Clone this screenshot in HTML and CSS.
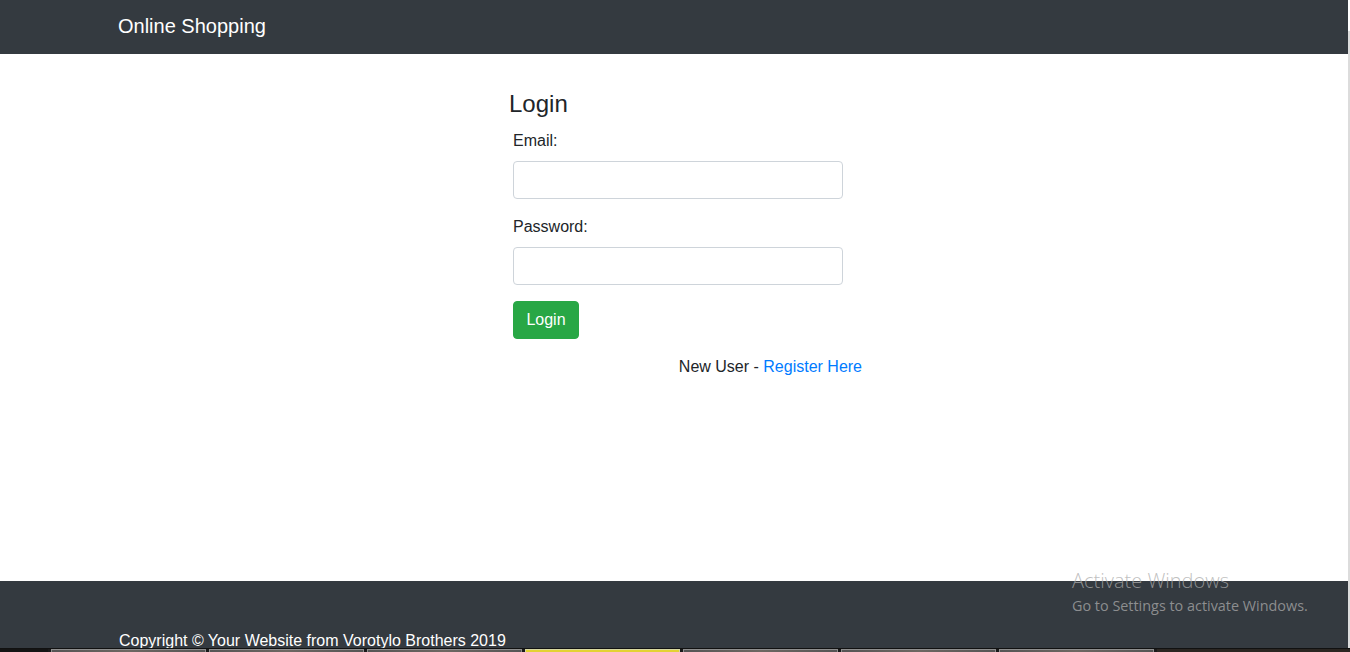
FILE: index.html
```html
<!DOCTYPE html>
<html lang="en">
<head>
<meta charset="utf-8">
<title>Online Shopping - Login</title>
<link rel="stylesheet" href="styles.css">
</head>
<body>
<div class="screen">
  <div class="page">
    <nav class="navbar">
      <div class="container">
        <a class="brand" href="#">Online Shopping</a>
      </div>
    </nav>
    <main class="main">
      <div class="container">
        <div class="login-col">
          <h3 class="title">Login</h3>
          <form class="form">
            <div class="group">
              <label class="label" for="email">Email:</label>
              <input class="input" id="email" type="email">
            </div>
            <div class="group">
              <label class="label" for="password">Password:</label>
              <input class="input" id="password" type="password">
            </div>
            <button class="btn" type="button">Login</button>
          </form>
          <p class="register">New User - <a class="link" href="#">Register Here</a></p>
        </div>
      </div>
    </main>
    <footer class="footer">
      <div class="container">
        <p class="copy">Copyright &copy; Your Website from Vorotylo Brothers 2019</p>
      </div>
    </footer>
  </div>
  <div class="edge"></div>
</div>
<div class="watermark">
  <div class="wm-title">Activate Windows</div>
  <div class="wm-sub">Go to Settings to activate Windows.</div>
</div>
<div class="taskbar">
  <div class="tb-start"></div>
  <div class="tb-item"></div>
  <div class="tb-item"></div>
  <div class="tb-item"></div>
  <div class="tb-item tb-active"></div>
  <div class="tb-item"></div>
  <div class="tb-item"></div>
  <div class="tb-item"></div>
  <div class="tb-rest"></div>
</div>
</body>
</html>
```
FILE: styles.css
```css
* { box-sizing: border-box; }
html, body {
  margin: 0;
  padding: 0;
  height: 652px;
  overflow: hidden;
}
body {
  font-family: "Liberation Sans", Arial, sans-serif;
  font-size: 16px;
  line-height: 1.5;
  color: #212529;
  background: #fff;
}
.screen {
  display: flex;
  height: 652px;
}
.page {
  width: 1348px;
  display: flex;
  flex-direction: column;
}
.edge {
  width: 2px;
  background: linear-gradient(to bottom, #ffffff 0, #ffffff 31px, #dcdcdc 31px, #dcdcdc 100%);
}
.container {
  width: 1140px;
  margin: 0 auto;
  padding: 0 15px;
}
.navbar {
  background: #343a40;
  height: 54px;
  display: flex;
  align-items: center;
}
.brand {
  color: #fff;
  text-decoration: none;
  font-size: 20px;
  line-height: 30px;
  display: inline-block;
  padding-bottom: 2px;
  margin-left: -1px;
}
.main {
  flex: 1;
}
.login-col {
  width: 355px;
  margin-left: 388px;
  padding-top: 35px;
}
.title {
  margin: 0 0 11px;
  padding-left: 2px;
  font-size: 24px;
  font-weight: 500;
  line-height: 29px;
}
.form {
  padding-left: 6px;
  width: 336px;
}
.group {
  margin-bottom: 16px;
}
.label {
  display: block;
  margin-bottom: 8px;
}
.input {
  display: block;
  width: 330px;
  height: 38px;
  border: 1px solid #ced4da;
  border-radius: 4px;
  background: #fff;
  padding: 6px 12px;
  font: inherit;
}
.btn {
  display: inline-block;
  background: #28a745;
  border: 1px solid #28a745;
  color: #fff;
  font: inherit;
  line-height: 24px;
  padding: 6px 12px;
  height: 38px;
  width: 66px;
  border-radius: 4px;
}
.register {
  margin: 16px 0 0;
  text-align: right;
}
.link {
  color: #007bff;
  text-decoration: none;
}
.footer {
  background: #343a40;
  height: 71px;
  padding-top: 48px;
}
.copy {
  margin: 0;
  color: #fff;
  white-space: nowrap;
}
.watermark {
  position: absolute;
  left: 1072px;
  top: 567px;
  font-family: "Open Sans", "Noto Sans", sans-serif;
  color: rgba(171, 171, 171, 0.75);
  white-space: nowrap;
}
.wm-title {
  font-size: 20px;
  font-weight: 300;
  line-height: 28px;
}
.wm-sub {
  font-size: 14.4px;
  font-weight: 400;
  line-height: 21px;
}
.taskbar {
  position: fixed;
  left: 0;
  right: 0;
  bottom: 0;
  height: 4px;
  display: flex;
  gap: 3px;
  background: #1a1a1a;
  border-top: 1px solid #111;
}
.tb-start {
  width: 48px;
  background: #141414;
}
.tb-item {
  width: 155px;
  border: 1px solid #8e8e8e;
  border-bottom: none;
  background: linear-gradient(to right, #555, #6d6762, #555);
}
.tb-active {
  background: #e3d232;
  border-color: #d8d8a0;
}
.tb-rest {
  flex: 1;
  background: #2b2622;
}
```
